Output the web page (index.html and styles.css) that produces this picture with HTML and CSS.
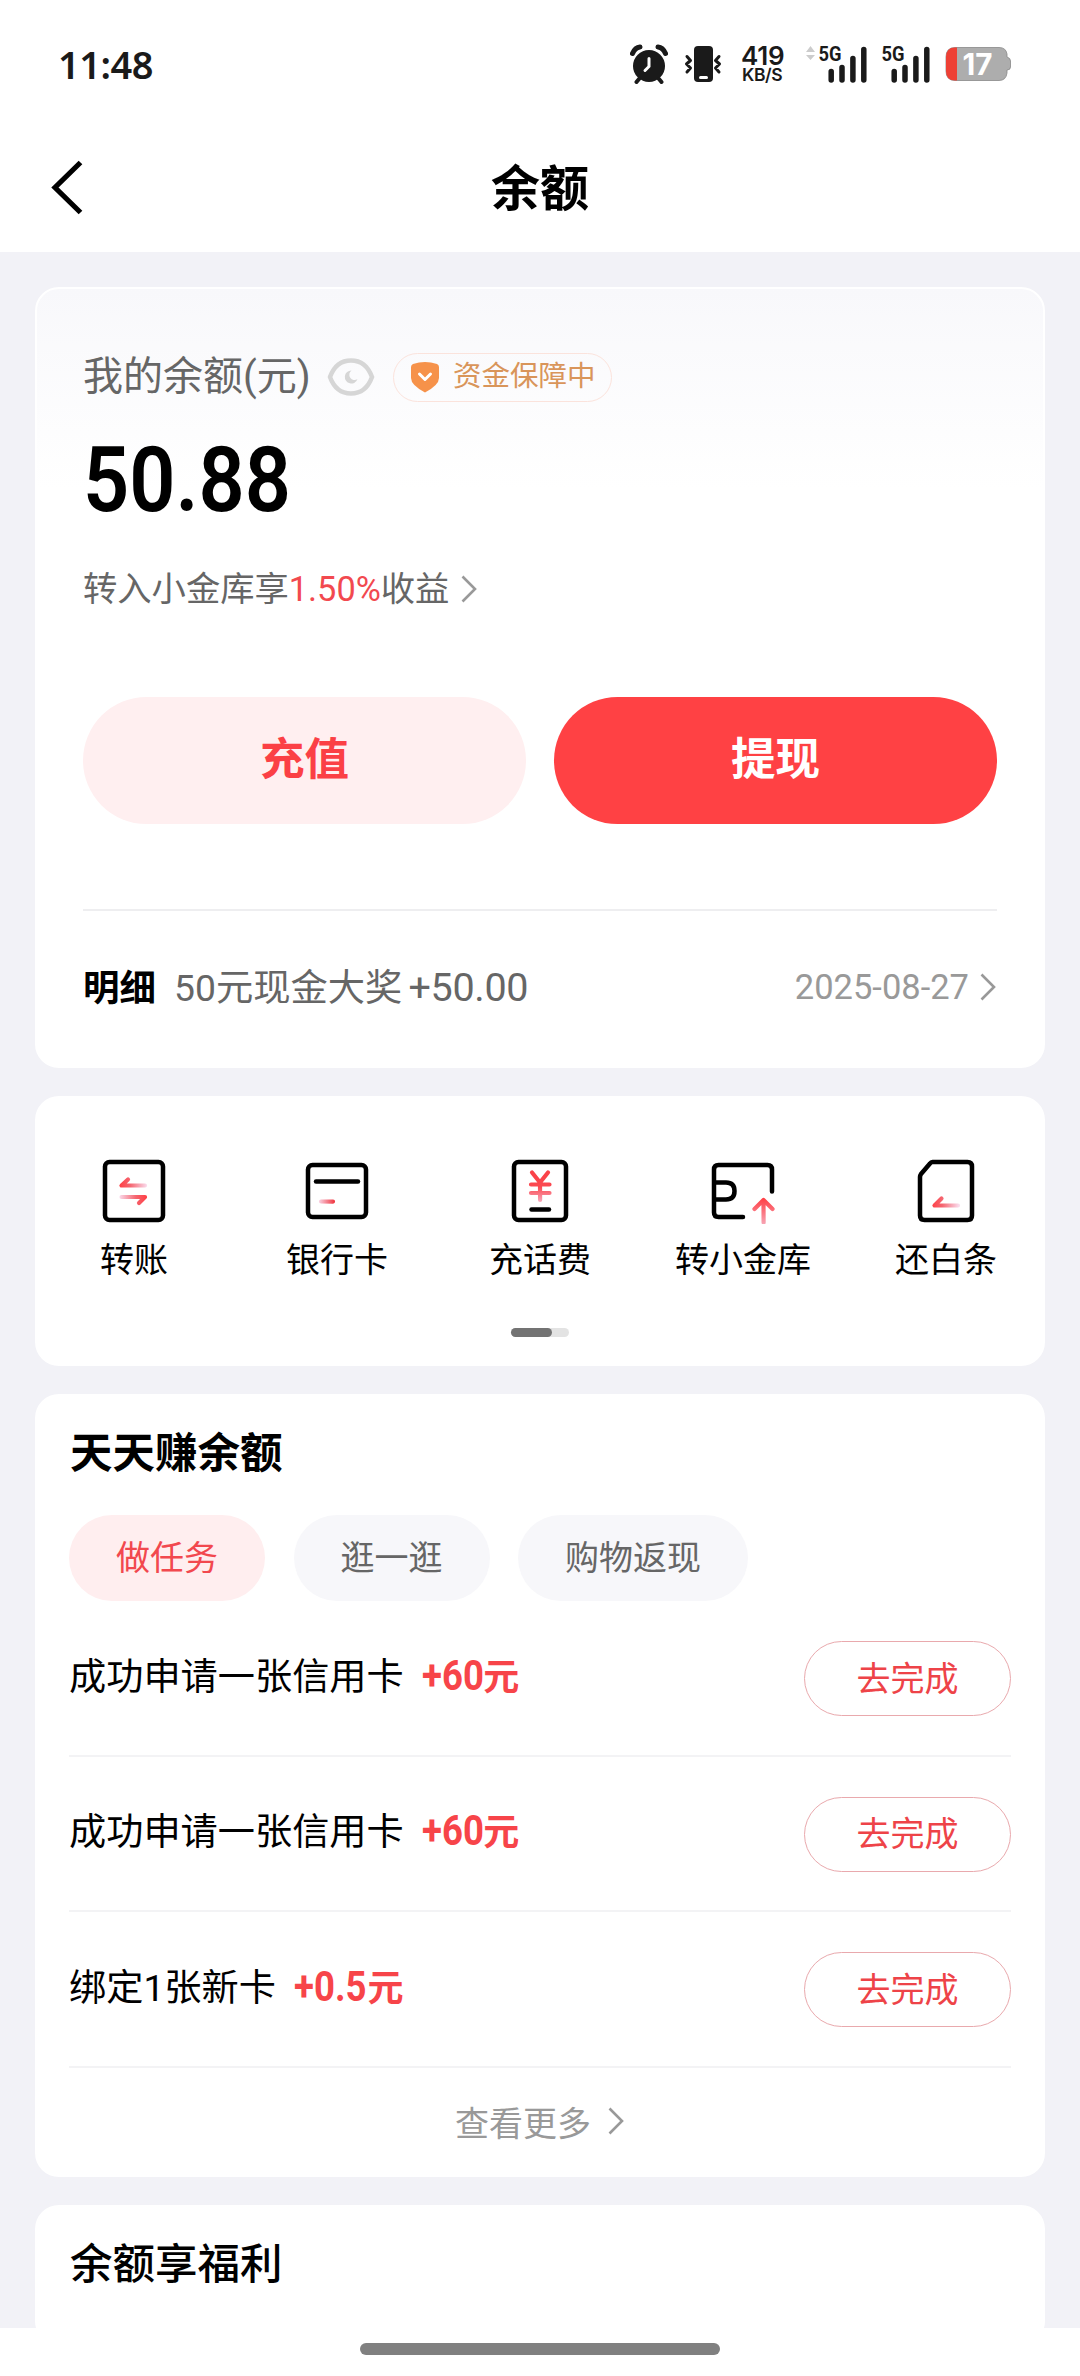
FILE: index.html
```html
<!DOCTYPE html>
<html lang="zh-CN">
<head>
<meta charset="utf-8">
<title>余额</title>
<link rel="stylesheet" href="styles.css">
</head>
<body>
<div class="screen">
  <header class="top">
    <div class="status">
      <span class="time">11:48</span>
      <div class="status-icons">
        <svg class="alarm" width="38" height="40" viewBox="0 0 38 40"><circle cx="19" cy="22" r="16" fill="#1a1a1a"/><path d="M2.500 9.500Q5 3.500 10 3M35.500 9.500Q33 3.500 28 3" stroke="#1a1a1a" stroke-width="5" stroke-linecap="round" fill="none"/><path d="M9 35l-2.500 3M29 35l2.500 3" stroke="#1a1a1a" stroke-width="4" stroke-linecap="round"/><path d="M19 14.500v8l-4 4" stroke="#fff" stroke-width="3" stroke-linecap="round" fill="none"/></svg>
        <svg class="vibrate" width="38" height="38" viewBox="0 0 38 38"><rect x="10" y="1" width="19" height="36" rx="4" fill="#1a1a1a"/><path d="M16.500 32.500h6" stroke="#fff" stroke-width="3" stroke-linecap="round"/><path d="M3 11.500l3.500 4L2.500 19l4 4-3.500 4M35 11.500l-3.500 4 4 3.500-4 4 3.500 4" stroke="#1a1a1a" stroke-width="3" stroke-linecap="round" stroke-linejoin="round" fill="none"/></svg>
        <div class="speed"><b>419</b><span>KB/S</span></div>
        <svg class="signal" width="62" height="50" viewBox="0 -6 62 50"><path d="M5.500 1L10 7H1zM5.500 15L1 10h9z" fill="#ccc"/><text x="13.500" y="16" textLength="23" lengthAdjust="spacingAndGlyphs" class="net">5G</text><path d="M26.200 26v8.500M37 22v12.500M47.900 13v21.500M58.800 4v30.500" transform="translate(0 .5)" stroke="#1a1a1a" stroke-width="5.500" stroke-linecap="round"/></svg>
        <svg class="signal second" width="50" height="50" viewBox="0 -6 50 50"><text x="1.500" y="16" textLength="23" lengthAdjust="spacingAndGlyphs" class="net">5G</text><path d="M14.200 26v8.500M25 22v12.500M35.900 13v21.500M46.800 4v30.500" transform="translate(0 .5)" stroke="#1a1a1a" stroke-width="5.500" stroke-linecap="round"/></svg>
        <svg class="battery" width="68" height="36" viewBox="0 0 68 36"><path d="M10 1.500H54Q61 1.500 62 8V11Q65.500 12 65.500 15V21Q65.500 24 62 24V27Q61 34.500 54 34.500H10Q1 34.500 1 25V11Q1 1.500 10 1.500Z" fill="#adadad" stroke="#888" stroke-width=".8"/><path d="M12 1.500H10Q1 1.500 1 11V25Q1 34.500 10 34.500H12Z" fill="#ee4035"/><text x="17.500" y="29" textLength="30" lengthAdjust="spacingAndGlyphs" class="level">17</text></svg>
      </div>
    </div>
    <nav class="nav">
      <svg class="back" width="34" height="56" viewBox="0 0 34 56"><path d="M30.500 3.500L5 28.500l25.500 25" stroke="#000" stroke-width="5.200" fill="none"/></svg>
      <h1>余额</h1>
    </nav>
  </header>

  <main class="content">
    <section class="card balance">
      <div class="label-row">
        <span class="label">我的余额(元)</span>
        <svg class="eye" width="48" height="38" viewBox="0 0 48 38"><path d="M3 19Q9 2.500 24 2.500T45 19Q39 35.500 24 35.500T3 19Z" fill="none" stroke="#d6d6d6" stroke-width="4.500"/><path d="M24.500 12.500a6.500 6.500 0 1 0 6 8.500a5 5 0 1 1-6-8.500Z" fill="#d6d6d6"/></svg>
        <span class="badge"><svg width="30" height="32" viewBox="0 0 30 32"><path d="M3 3Q15-1 27 3Q29 4 29 6V17Q29 24 15 31.500Q1 24 1 17V6Q1 4 3 3Z" fill="#f6924a"/><path d="M9.500 13l5.500 5.500 5.500-5.500" stroke="#fff" stroke-width="3" stroke-linecap="round" stroke-linejoin="round" fill="none"/></svg><span>资金保障中</span></span>
      </div>
      <div class="amount">50.88</div>
      <div class="yield"><span>转入小金库享</span><em>1.50%</em><span>收益</span><svg class="chev" width="18" height="30" viewBox="0 0 18 30"><path d="M2.500 2.500L15 15 2.500 27.500" fill="none" stroke="#999" stroke-width="2.600"/></svg></div>
      <div class="actions"><button class="soft">充值</button><button class="solid">提现</button></div>
      <div class="detail">
        <b>明细</b><span class="what">50元现金大奖</span><span class="plus">+50.00</span><span class="date">2025-08-27</span>
        <svg class="chev" width="18" height="30" viewBox="0 0 18 30"><path d="M2.500 2.500L15 15 2.500 27.500" fill="none" stroke="#999" stroke-width="2.600"/></svg>
      </div>
    </section>

    <section class="card services">
      <svg class="defs" width="0" height="0"><defs>
        <linearGradient id="fadeRight" gradientUnits="userSpaceOnUse" x1="18" y1="0" x2="46" y2="0"><stop offset="0" stop-color="#ff3d43"/><stop offset=".4" stop-color="#f5656f"/><stop offset="1" stop-color="#fadced"/></linearGradient>
        <linearGradient id="fadeLeft" gradientUnits="userSpaceOnUse" x1="46" y1="0" x2="18" y2="0"><stop offset="0" stop-color="#ff3d43"/><stop offset=".4" stop-color="#f5656f"/><stop offset="1" stop-color="#fadced"/></linearGradient>
        <linearGradient id="fadeDash" gradientUnits="userSpaceOnUse" x1="30" y1="0" x2="14" y2="0"><stop offset="0" stop-color="#f03b45"/><stop offset="1" stop-color="#fadced"/></linearGradient>
        <linearGradient id="fadeDown" gradientUnits="userSpaceOnUse" x1="0" y1="18" x2="0" y2="46"><stop offset="0" stop-color="#fa4248"/><stop offset=".4" stop-color="#fb4a52"/><stop offset="1" stop-color="#f8b8cc"/></linearGradient>
        <linearGradient id="fadeArrow" gradientUnits="userSpaceOnUse" x1="0" y1="40" x2="0" y2="66"><stop offset="0" stop-color="#ff3d43"/><stop offset="1" stop-color="#f7a5b4"/></linearGradient>
      </defs></svg>
      <div class="grid">
        <div class="item"><svg width="66" height="66" viewBox="0 0 66 66"><rect x="4" y="4" width="58" height="58" rx="4.500" class="line"/><path d="M27 21.500L20.500 27.500H44" stroke="url(#fadeRight)" class="tint"/><path d="M20.500 39H44L38 45" stroke="url(#fadeLeft)" class="tint"/></svg><span>转账</span></div>
        <div class="item"><svg width="66" height="66" viewBox="0 0 66 66"><rect x="4" y="7" width="58" height="52" rx="4.500" class="line"/><path d="M12 23.500H54" class="line"/><path d="M17 43.500L29 43.600" stroke="url(#fadeDash)" class="tint"/></svg><span>银行卡</span></div>
        <div class="item"><svg width="66" height="66" viewBox="0 0 66 66"><rect x="7" y="4" width="52" height="58" rx="4.500" class="line"/><path d="M25 14.500L33 24.500 41 14.500M24 26.500H42.500M24 35H42.500M33 25L33.100 42" stroke="url(#fadeDown)" class="tint"/><path d="M24.500 51.500H42" class="line"/></svg><span>充话费</span></div>
        <div class="item"><svg width="66" height="66" viewBox="0 0 66 66"><path d="M33 59H8.500Q4 59 4 54.500V11.500Q4 7 8.500 7H57.500Q62 7 62 11.500V33.500M4 24.500H16Q24.500 24.500 24.500 33T16 41.500H4" class="line"/><path d="M44.500 51L53.500 42 62.500 51M53.500 43L53.600 64.500" stroke="url(#fadeArrow)" class="tint"/></svg><span>转小金库</span></div>
        <div class="item"><svg width="66" height="66" viewBox="0 0 66 66"><path d="M19.500 4H54.500Q59 4 59 8.500V57.500Q59 62 54.500 62H11.500Q7 62 7 57.500V19Q7 17.500 8 16L17 5.500Q18 4 19.500 4Z" class="line"/><path d="M28.500 40.500L21.500 47.500H45" stroke="url(#fadeRight)" class="tint"/></svg><span>还白条</span></div>
      </div>
      <div class="pager"><i></i></div>
    </section>

    <section class="card tasks">
      <h2>天天赚余额</h2>
      <div class="tabs"><span class="tab on">做任务</span><span class="tab">逛一逛</span><span class="tab">购物返现</span></div>
      <ul>
        <li><span>成功申请一张信用卡</span><b><i>+60</i>元</b><button>去完成</button></li>
        <li><span>成功申请一张信用卡</span><b><i>+60</i>元</b><button>去完成</button></li>
        <li><span>绑定1张新卡</span><b><i>+0.5</i>元</b><button>去完成</button></li>
      </ul>
      <div class="more"><span>查看更多</span><svg class="chev" width="18" height="30" viewBox="0 0 18 30"><path d="M2.500 2.500L15 15 2.500 27.500" fill="none" stroke="#999" stroke-width="2.600"/></svg></div>
    </section>

    <section class="card perks"><h2>余额享福利</h2></section>
  </main>
  <footer class="gesture"><i></i></footer>
</div>
</body>
</html>
```
FILE: styles.css
```css
* { box-sizing: border-box; margin: 0; padding: 0; }
body { font-family: Roboto, "Noto Sans CJK SC", sans-serif; background: #f2f2f7; color: #000; }
button { font-family: inherit; border: 0; background: none; }
svg { display: block; flex: none; }
.screen { width: 1080px; height: 2376px; overflow: hidden; display: flex; flex-direction: column; white-space: nowrap; }

.top { height: 252px; background: #fff; flex: none; }
.status { height: 127px; padding: 0 67px 0 58px; display: flex; justify-content: space-between; align-items: center; }
.time { font: 600 38px/50px "Noto Sans", sans-serif; color: #1a1a1a; letter-spacing: -.5px; }
.status-icons { display: flex; align-items: center; color: #1a1a1a; }
.vibrate { margin-left: 16px; }
.speed { width: 45px; margin-left: 19px; display: flex; flex-direction: column; font-family: Inter, sans-serif; }
.speed b { font-size: 26px; line-height: 22px; font-weight: 600; letter-spacing: -.3px; }
.speed span { font-size: 17.500px; line-height: 16px; font-weight: 600; letter-spacing: -.4px; padding-left: 1px; }
.signal { margin-left: 19px; }
.signal.second { margin-left: 13px; }
.net { font: 700 21px Roboto, sans-serif; fill: #1a1a1a; }
.battery { margin-left: 15px; }
.level { font: 700 30px Inter, sans-serif; fill: #fff; }
.nav { height: 125px; padding: 0 50px; display: grid; grid-template-columns: 100px 1fr 100px; align-items: center; }
.back { margin-top: -6px; }
h1 { font-size: 49px; line-height: 70px; text-align: center; font-weight: 700; }

.content { flex: 1; min-height: 0; overflow: hidden; padding: 35px 35px 0; display: flex; flex-direction: column; gap: 28px; }
.card { background: #fff; border-radius: 24px; flex: none; }

.balance { height: 781px; padding: 63px 46px 0; border: 2px solid #fff; background: linear-gradient(#f8f8fb, #fff 200px); }
.label-row { height: 50px; display: flex; align-items: center; color: #666; }
.label { width: 227px; font-size: 40px; line-height: 50px; }
.eye { margin-left: 17px; }
.badge { margin-left: 18px; width: 219px; height: 49px; border: 1.500px solid #fbe3dc; border-radius: 25px; display: flex; align-items: center; padding-left: 16px; gap: 13px; font-size: 28.500px; line-height: 40px; color: #d9955a; }
.amount { height: 100px; margin-top: 28px; font-size: 91px; line-height: 100px; font-weight: 600; transform: scaleX(.89); transform-origin: left; }
.yield { height: 46px; margin-top: 36px; display: flex; align-items: center; font-size: 34.300px; line-height: 46px; color: #666; }
.yield em { font-style: normal; color: #f2494f; width: 92px; text-align: center; }
.yield .chev { margin-left: 11px; }
.actions { margin-top: 85px; display: grid; grid-template-columns: 1fr 1fr; gap: 28px; }
.actions button { height: 127px; border-radius: 64px; font-size: 44.500px; font-weight: 700; line-height: 60px; padding-bottom: 2px; }
.soft { background: #ffeff0; color: #fb4045; }
.solid { background: #ff4144; color: #fff; }
.detail { height: 154px; margin-top: 85px; border-top: 2px solid #eeeef0; display: flex; align-items: center; font-size: 37px; color: #666; }
.detail b { color: #000; font-size: 36.500px; padding-bottom: 4px; }
.what { margin-left: 18px; font-size: 37.300px; padding-bottom: 4px; }
.plus { margin-left: 6px; font-size: 39.500px; letter-spacing: -.3px; }
.date { margin-left: auto; font-size: 34.500px; color: #999; }
.detail .chev { margin-left: 10px; }

.services { height: 270px; padding-top: 62px; }
.defs { position: absolute; }
.grid { display: grid; grid-template-columns: repeat(5, 203px); justify-content: center; }
.item { display: flex; flex-direction: column; align-items: center; font-size: 34px; line-height: 46px; }
.item span { margin-top: 13px; }
.line { fill: none; stroke: #000; stroke-width: 4.500; stroke-linecap: round; stroke-linejoin: round; }
.tint { fill: none; stroke-width: 4.200; stroke-linecap: round; stroke-linejoin: round; }
.pager { width: 58px; height: 9px; margin: 45px auto 0; background: #e3e3e3; border-radius: 5px; }
.pager i { display: block; width: 41px; height: 9px; border-radius: 5px; background: #737373; }

.tasks { height: 783px; padding: 30px 34px 0 34px; }
h2 { font-size: 42.500px; line-height: 60px; font-weight: 700; padding-left: 1px; }
.tabs { margin-top: 31px; display: flex; gap: 28.500px; }
.tab { height: 86px; padding: 0 47px; border-radius: 43px; background: #f7f7fa; color: #666; font-size: 34px; line-height: 86px; }
.tab.on { background: #ffeeef; color: #f2484e; }
ul { list-style: none; }
li { height: 155.500px; display: flex; align-items: center; border-bottom: 2px solid #f3f3f5; font-size: 37.200px; line-height: 54px; padding-top: 2px; }
li > span { padding-bottom: 4px; }
li b { margin-left: 18px; padding-bottom: 4px; font-size: 36px; color: #f74449; }
li b i { display: inline-block; font-style: normal; font-size: 42px; transform: scaleX(.87); transform-origin: left; margin-right: -9.500px; }
li button { margin-left: auto; width: 207px; height: 75px; border: 1.500px solid #e9a9ad; border-radius: 38px; font-size: 34px; color: #ee4348; line-height: 46px; }
.more { height: 107px; display: flex; justify-content: center; align-items: center; gap: 16px; font-size: 34px; color: #999; }

.perks { height: 140px; padding: 30px 34px; }
.perks h2 { font-weight: 500; }
.gesture { height: 48px; flex: none; background: #fff; padding-top: 15px; }
.gesture i { display: block; width: 360px; height: 12px; margin: 0 auto; border-radius: 6px; background: #808080; }
```
